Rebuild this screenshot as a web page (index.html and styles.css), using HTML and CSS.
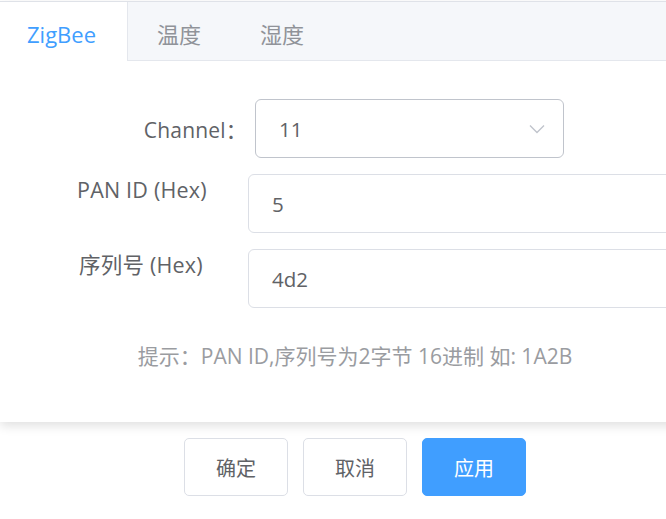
FILE: index.html
```html
<!DOCTYPE html>
<html lang="zh-CN">
<head>
<meta charset="utf-8">
<title>ZigBee</title>
<link rel="stylesheet" href="styles.css">
</head>
<body>
<div class="page">
  <div class="card">
    <div class="tabs">
      <div class="tab active">ZigBee</div>
      <div class="tab">温度</div>
      <div class="tab">湿度</div>
    </div>
    <div class="form">
      <div class="row row-select">
        <label class="label-right">Channel：</label>
        <div class="select">
          <span class="value">11</span>
          <svg class="chev" width="16" height="10" viewBox="0 0 16 10"><path d="M1 1.5 L8 8.5 L15 1.5" fill="none" stroke="#c0c4cc" stroke-width="1.4"/></svg>
        </div>
      </div>
      <div class="row row-input">
        <label class="label-left">PAN ID (Hex)</label>
        <div class="input"><span class="value">5</span></div>
      </div>
      <div class="row row-input">
        <label class="label-left l2">序列号 (Hex)</label>
        <div class="input"><span class="value">4d2</span></div>
      </div>
      <p class="hint">提示：PAN ID,序列号为2字节 16进制 如: 1A2B</p>
    </div>
  </div>
  <div class="actions">
    <button class="btn">确定</button>
    <button class="btn">取消</button>
    <button class="btn primary">应用</button>
  </div>
</div>
</body>
</html>
```
FILE: styles.css
```css
html, body {
  margin: 0;
  padding: 0;
  background: #ffffff;
  overflow: hidden;
}
body {
  font-family: "Open Sans", "Noto Sans CJK SC", sans-serif;
  color: #606266;
}
.page {
  width: 710px;
  padding-top: 1px;
}
.card {
  border-top: 1px solid #dfe2e8;
  background: #fff;
  box-shadow: 0 4px 10px rgba(0, 0, 0, 0.12);
  padding-bottom: 52px;
}
.tabs {
  display: flex;
  height: 58px;
  background: #f5f7fa;
  border-bottom: 1px solid #e4e7ed;
}
.tab {
  box-sizing: border-box;
  height: 58px;
  padding: 6px 30px 0 29px;
  font-size: 22px;
  line-height: 52px;
  color: #909399;
}
.tab.active {
  background: #fff;
  color: #409eff;
  border-right: 1px solid #e4e7ed;
  height: 59px;
  padding: 6px 31px 0 27px;
}
.form {
  padding-top: 38px;
}
.row {
  display: flex;
}
.row-select {
  align-items: center;
  gap: 8px;
}
.label-right {
  width: 247px;
  text-align: right;
  font-size: 21px;
  letter-spacing: 0.2px;
}
.select {
  box-sizing: border-box;
  width: 309px;
  height: 59px;
  border: 1px solid #c0c4cc;
  border-radius: 6px;
  display: flex;
  align-items: center;
  justify-content: space-between;
  padding: 0 18px 0 23px;
}
.value {
  font-size: 20.5px;
  color: #606266;
}
.row-input {
  margin-top: 16px;
}
.label-left {
  box-sizing: border-box;
  width: 248px;
  padding-left: 77px;
  padding-top: 2px;
  font-size: 21.5px;
  line-height: 28px;
  letter-spacing: 0.2px;
}
.label-left.l2 {
  padding-left: 79px;
}
.input {
  box-sizing: border-box;
  width: 440px;
  height: 59px;
  border: 1px solid #dcdfe6;
  border-radius: 6px;
  display: flex;
  align-items: center;
  padding-left: 23px;
}
.hint {
  margin: 34px 0 0;
  text-align: center;
  font-size: 21px;
  line-height: 28px;
  color: #9a9ca1;
}
.actions {
  display: flex;
  justify-content: center;
  gap: 15px;
  margin-top: 16px;
}
.btn {
  box-sizing: border-box;
  width: 104px;
  height: 58px;
  border: 1px solid #dcdfe6;
  border-radius: 5px;
  background: #fff;
  color: #606266;
  font-family: "Noto Sans CJK SC", sans-serif;
  font-size: 20px;
  padding: 0;
}
.btn.primary {
  background: #409eff;
  border-color: #409eff;
  color: #fff;
}
```
